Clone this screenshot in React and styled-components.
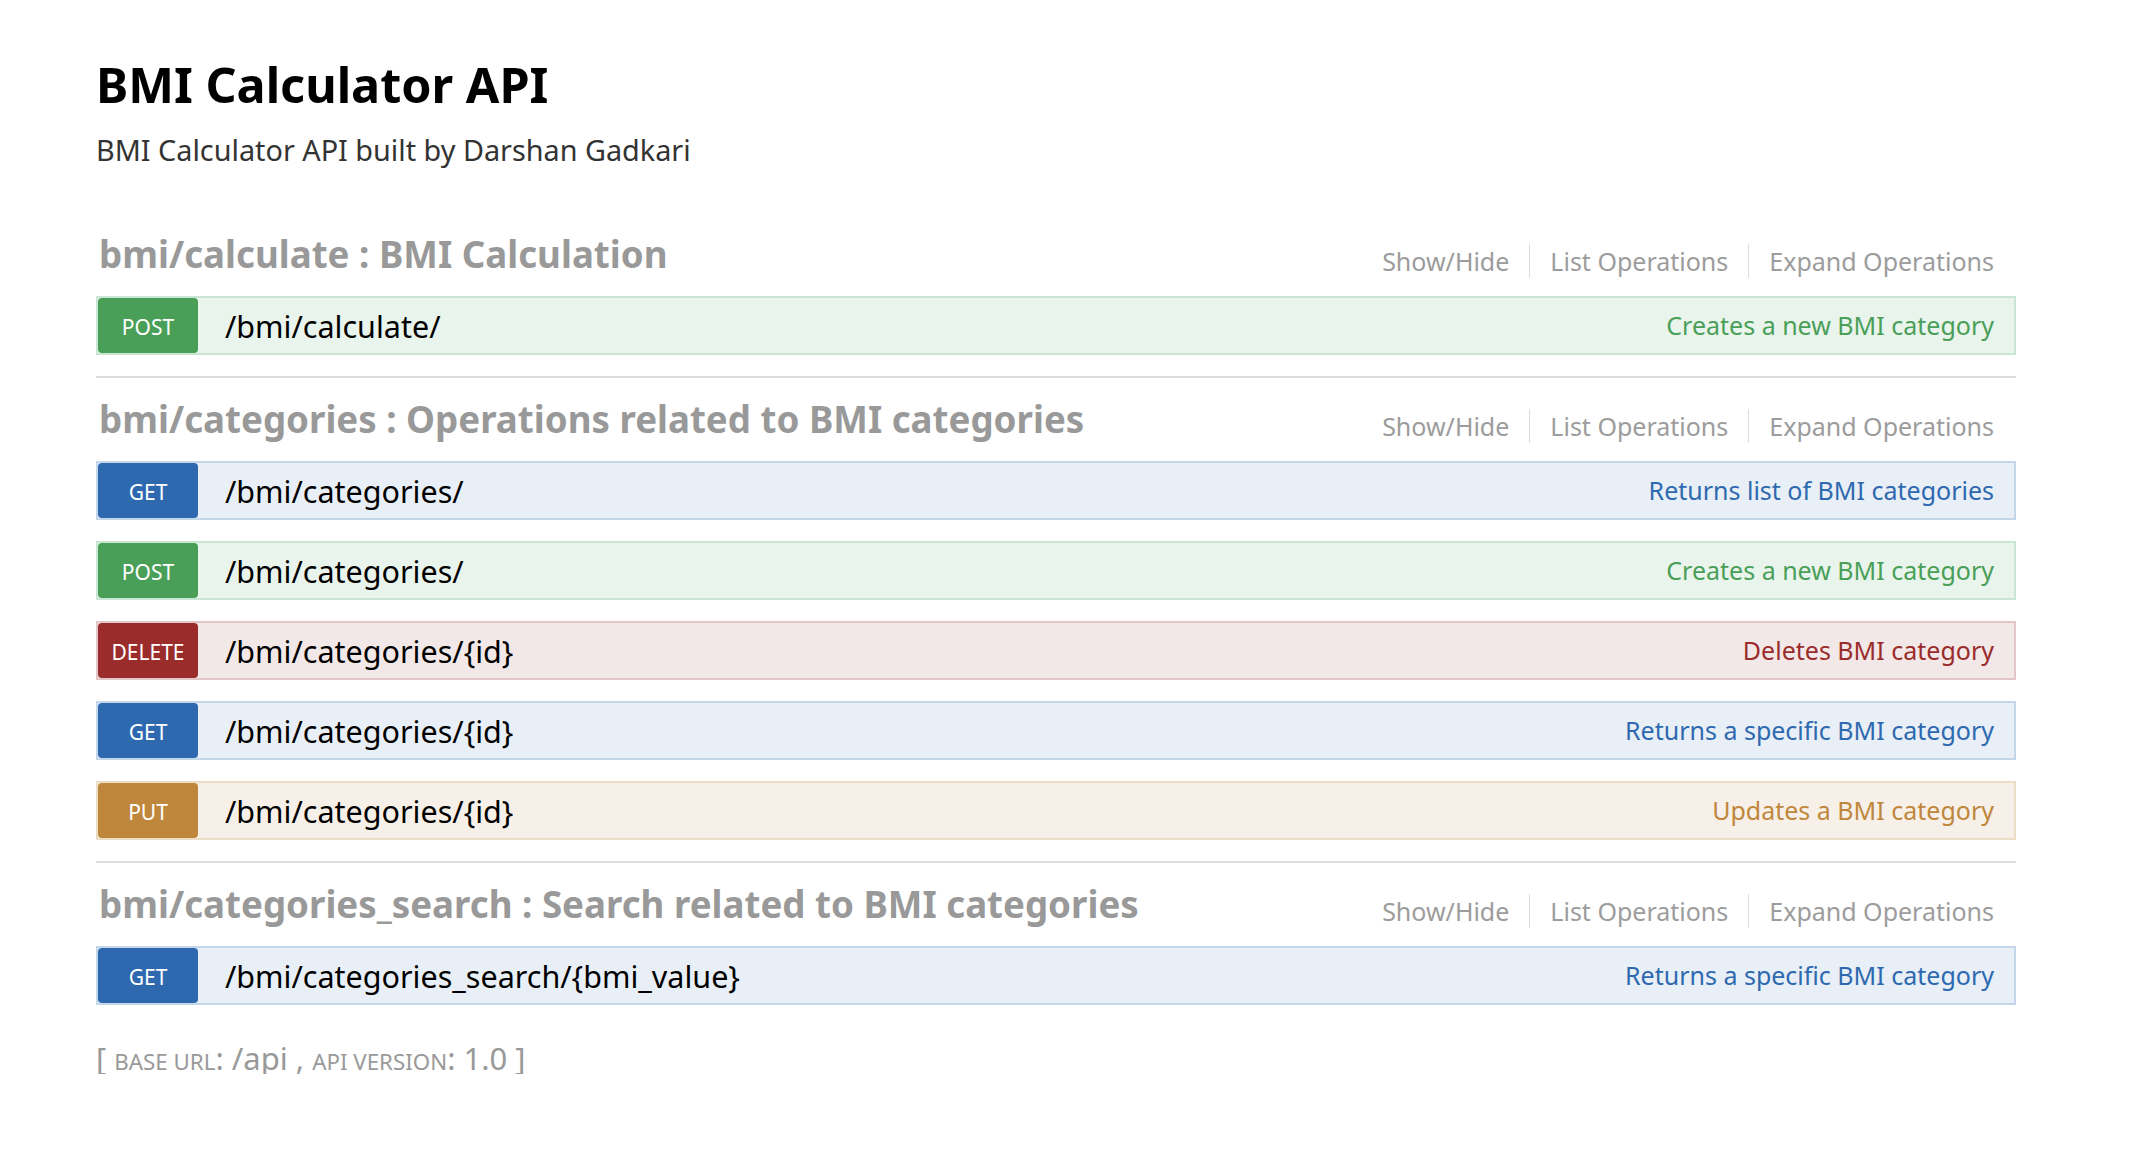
import React from 'react';
import styled, { createGlobalStyle } from 'styled-components';

const GlobalStyle = createGlobalStyle`
  html, body {
    margin: 0;
    padding: 0;
    background: #fff;
  }
  body {
    font-family: "Noto Sans", "Open Sans", sans-serif;
  }
`;

// colours per http method: badge / bar background / bar border
const METHODS = {
  get: { main: '#2e69b0', bg: '#e8eff6', border: '#c4d6ea' },
  post: { main: '#4a9f58', bg: '#e9f4ec', border: '#c8e6d3' },
  delete: { main: '#9a2c2b', bg: '#f2e8e8', border: '#e3c6c8' },
  put: { main: '#bf873c', bg: '#f7f0e8', border: '#ecddc6' }
};

const resources = [
  {
    name: 'bmi/calculate',
    description: 'BMI Calculation',
    operations: [{ method: 'post', path: '/bmi/calculate/', summary: 'Creates a new BMI category' }]
  },
  {
    name: 'bmi/categories',
    description: 'Operations related to BMI categories',
    operations: [
      { method: 'get', path: '/bmi/categories/', summary: 'Returns list of BMI categories' },
      { method: 'post', path: '/bmi/categories/', summary: 'Creates a new BMI category' },
      { method: 'delete', path: '/bmi/categories/{id}', summary: 'Deletes BMI category' },
      { method: 'get', path: '/bmi/categories/{id}', summary: 'Returns a specific BMI category' },
      { method: 'put', path: '/bmi/categories/{id}', summary: 'Updates a BMI category' }
    ]
  },
  {
    name: 'bmi/categories_search',
    description: 'Search related to BMI categories',
    operations: [
      { method: 'get', path: '/bmi/categories_search/{bmi_value}', summary: 'Returns a specific BMI category' }
    ]
  }
];

const Wrap = styled.div`
  width: 1920px;
  margin-left: 96px;
  line-height: 1;
`;

const InfoTitle = styled.h1`
  margin: 0;
  padding-top: 60px;
  font-size: 48.5px;
  font-weight: bold;
  line-height: 1;
  color: #000;
`;

const InfoDescription = styled.div`
  margin-top: 27px;
  font-size: 28.8px;
  line-height: 1;
  color: #333;
`;

const ResourceList = styled.ul`
  list-style: none;
  margin: 49px 0 0;
  padding: 0;
`;

const Resource = styled.li`
  border-bottom: 2px solid #ddd;

  &:last-child {
    border-bottom: none;
  }
`;

const ResourceHeading = styled.div`
  display: flex;
  align-items: center;
  height: 83px;
`;

const ResourceTitle = styled.h2`
  margin: 0;
  padding-left: 3px;
  font-size: 36.7px;
  font-weight: bold;
  color: #999;
`;

const Options = styled.ul`
  display: flex;
  list-style: none;
  margin: 0 0 0 auto;
  padding: 12px 0 0;
`;

const Option = styled.li`
  padding: 2px 20px;
  font-size: 25px;
  line-height: 1.2;
  color: #9c9c9c;
  border-right: 1px solid #ddd;

  &:last-child {
    border-right: none;
    padding-right: 22px;
  }
`;

const Operations = styled.ul`
  list-style: none;
  margin: 0;
  padding: 0;
`;

const Operation = styled.li`
  display: flex;
  align-items: center;
  height: 59px;
  box-sizing: border-box;
  margin-bottom: 21px;
  background: ${(p) => METHODS[p.$method].bg};
  border: 2px solid ${(p) => METHODS[p.$method].border};
`;

const MethodBadge = styled.span`
  display: flex;
  align-items: center;
  justify-content: center;
  width: 100px;
  height: 100%;
  box-sizing: border-box;
  padding-top: 4px;
  border-radius: 4px;
  background: ${(p) => METHODS[p.$method].main};
  color: #fff;
  font-size: 21px;
  text-transform: uppercase;
`;

const Path = styled.span`
  margin-left: 27px;
  font-size: 30.5px;
  color: #000;
`;

const Summary = styled.span`
  margin-left: auto;
  padding-right: 20px;
  font-size: 25px;
  color: ${(p) => METHODS[p.$method].main};
`;

const Footer = styled.h4`
  margin: 38px 0 0;
  font-size: 31px;
  font-weight: normal;
  color: #999;
`;

// synthesized small caps: capitals at about 70% of the running text
const SmallCaps = styled.span`
  font-size: 0.72em;
  text-transform: uppercase;
`;

export default function App() {
  return (
    <>
      <GlobalStyle />
      <Wrap>
        <InfoTitle>BMI Calculator API</InfoTitle>
        <InfoDescription>BMI Calculator API built by Darshan Gadkari</InfoDescription>

        <ResourceList>
          {resources.map((res) => (
            <Resource key={res.name}>
              <ResourceHeading>
                <ResourceTitle>
                  {res.name} : {res.description}
                </ResourceTitle>
                <Options>
                  <Option>Show/Hide</Option>
                  <Option>List Operations</Option>
                  <Option>Expand Operations</Option>
                </Options>
              </ResourceHeading>
              <Operations>
                {res.operations.map((op, i) => (
                  <Operation key={i} $method={op.method}>
                    <MethodBadge $method={op.method}>{op.method}</MethodBadge>
                    <Path>{op.path}</Path>
                    <Summary $method={op.method}>{op.summary}</Summary>
                  </Operation>
                ))}
              </Operations>
            </Resource>
          ))}
        </ResourceList>

        <Footer>
          [ <SmallCaps>base url</SmallCaps>: /api , <SmallCaps>api version</SmallCaps>: 1.0 ]
        </Footer>
      </Wrap>
    </>
  );
}
